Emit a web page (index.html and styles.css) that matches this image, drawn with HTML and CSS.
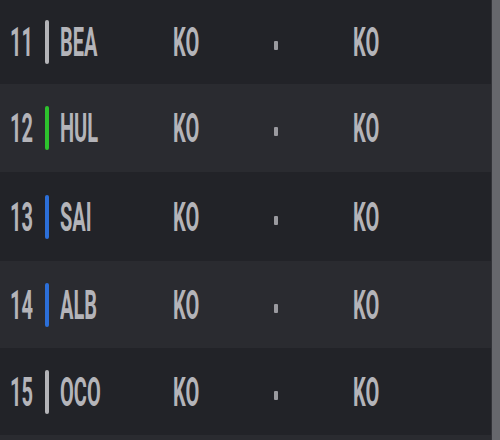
FILE: index.html
```html
<!DOCTYPE html>
<html>
<head>
<meta charset="utf-8">
<link rel="stylesheet" href="styles.css">
</head>
<body>
<div class="frame">
  <div class="list">
    <div class="row row-dark h84">
      <span class="pos"><span class="t">11</span></span>
      <span class="bar grey"></span>
      <span class="code"><span class="t">BEA</span></span>
      <span class="res1"><span class="t">KO</span></span>
      <span class="sep"><span class="dot"></span></span>
      <span class="res2"><span class="t">KO</span></span>
    </div>
    <div class="row row-light h88">
      <span class="pos"><span class="t">12</span></span>
      <span class="bar green"></span>
      <span class="code"><span class="t">HUL</span></span>
      <span class="res1"><span class="t">KO</span></span>
      <span class="sep"><span class="dot"></span></span>
      <span class="res2"><span class="t">KO</span></span>
    </div>
    <div class="row row-dark h89">
      <span class="pos"><span class="t">13</span></span>
      <span class="bar blue"></span>
      <span class="code"><span class="t">SAI</span></span>
      <span class="res1"><span class="t">KO</span></span>
      <span class="sep"><span class="dot"></span></span>
      <span class="res2"><span class="t">KO</span></span>
    </div>
    <div class="row row-light h87">
      <span class="pos"><span class="t">14</span></span>
      <span class="bar blue"></span>
      <span class="code"><span class="t">ALB</span></span>
      <span class="res1"><span class="t">KO</span></span>
      <span class="sep"><span class="dot"></span></span>
      <span class="res2"><span class="t">KO</span></span>
    </div>
    <div class="row row-dark h87">
      <span class="pos"><span class="t">15</span></span>
      <span class="bar grey"></span>
      <span class="code"><span class="t">OCO</span></span>
      <span class="res1"><span class="t">KO</span></span>
      <span class="sep"><span class="dot"></span></span>
      <span class="res2"><span class="t">KO</span></span>
    </div>
    <div class="row-light tail"></div>
  </div>
  <div class="scrollbar"></div>
</div>
</body>
</html>
```

FILE: styles.css
```css
html, body {
  margin: 0;
  padding: 0;
  background: #222328;
}
.frame {
  display: flex;
  width: 500px;
  height: 440px;
  overflow: hidden;
}
.list {
  flex: 1;
  display: flex;
  flex-direction: column;
}
.row {
  display: flex;
  align-items: center;
  padding-left: 10px;
  font-family: Roboto, "Liberation Sans", sans-serif;
  font-weight: 700;
  font-size: 20px;
  color: #b4b4b9;
}
.row-dark { background: #222328; }
.row-light { background: #2a2b30; }
.h84 { height: 84px; }
.h87 { height: 87px; }
.h88 { height: 88px; }
.h89 { height: 89px; }
.tail { flex: 1; }
.t {
  display: inline-block;
  transform: scaleY(2);
  transform-origin: center;
  line-height: 20px;
}
.pos { width: 35px; }
.bar {
  width: 4px;
  height: 44px;
  margin-right: 11px;
  border-radius: 2px;
}
.grey { background: #b4b4b8; }
.green { background: #2dc22d; }
.blue { background: #2c6fd8; }
.code { width: 113px; }
.res1 { width: 101px; }
.sep {
  width: 79px;
  display: flex;
  align-items: center;
}
.dot {
  width: 4px;
  height: 9px;
  margin-top: 7px;
  background: #9a9a9f;
  border-radius: 1px;
}
.scrollbar {
  width: 8px;
  background: #66676c;
  border-left: 1px solid #323338;
}
```
